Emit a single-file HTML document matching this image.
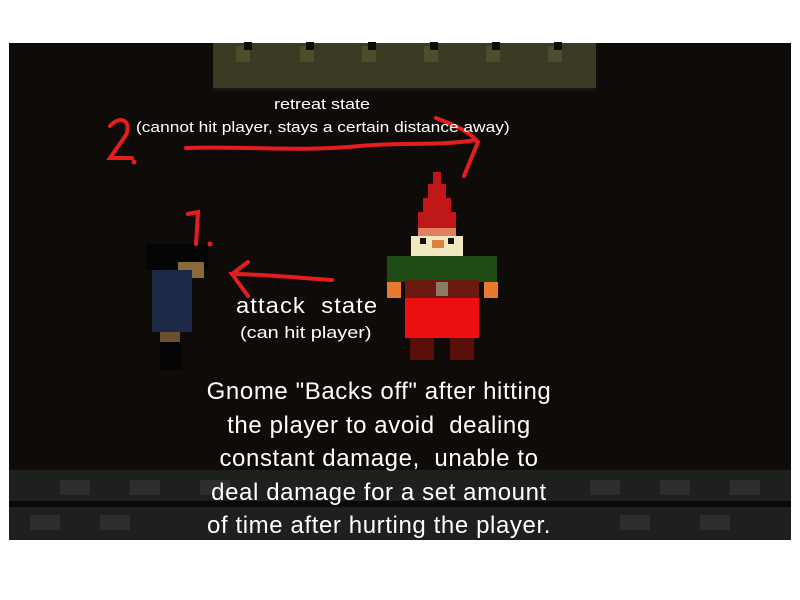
<!DOCTYPE html>
<html><head><style>
body{margin:0;width:800px;height:600px;background:#fff;position:relative;overflow:hidden;font-family:"Liberation Sans",sans-serif}
#p{position:absolute;left:9px;top:43px;width:782px;height:497px;background:#0e0b08;overflow:hidden}
.a{position:absolute}
.t{position:absolute;color:#fff;white-space:nowrap;transform-origin:0 0}
</style></head><body>
<div id="p">
<div class="a" style="left:204px;top:0;width:383px;height:45px;background:#3a3b22"></div>
<div class="a" style="left:204px;top:45px;width:383px;height:3px;background:#161510"></div>
<div class="a" style="left:0;top:427px;width:782px;height:70px;background:#1d201c"></div>
<div class="a" style="left:0;top:458px;width:782px;height:6px;background:#0a0a0a"></div>
</div>
<svg class="a" style="left:0;top:0" width="800" height="600">
<g fill="#4c4e2c">
<rect x="236" y="46" width="14" height="16"/><rect x="300" y="46" width="14" height="16"/><rect x="362" y="46" width="14" height="16"/><rect x="424" y="46" width="14" height="16"/><rect x="486" y="46" width="14" height="16"/><rect x="548" y="46" width="14" height="16"/>
</g>
<g fill="#0e0b08"><rect x="244" y="42" width="8" height="8"/><rect x="306" y="42" width="8" height="8"/><rect x="368" y="42" width="8" height="8"/><rect x="430" y="42" width="8" height="8"/><rect x="492" y="42" width="8" height="8"/><rect x="554" y="42" width="8" height="8"/></g>
<g fill="#2b2e2a">
<rect x="60" y="480" width="30" height="15"/><rect x="130" y="480" width="30" height="15"/><rect x="200" y="480" width="30" height="15"/><rect x="590" y="480" width="30" height="15"/><rect x="660" y="480" width="30" height="15"/><rect x="730" y="480" width="30" height="15"/>
<rect x="30" y="515" width="30" height="15"/><rect x="100" y="515" width="30" height="15"/><rect x="620" y="515" width="30" height="15"/><rect x="700" y="515" width="30" height="15"/>
</g>
<g>
<rect x="433" y="172" width="8" height="12" fill="#c01818"/>
<rect x="428" y="184" width="18" height="14" fill="#c01818"/>
<rect x="423" y="198" width="28" height="14" fill="#c01818"/>
<rect x="418" y="212" width="38" height="16" fill="#c01818"/>
<rect x="418" y="228" width="38" height="8" fill="#e08060"/>
<rect x="411" y="236" width="52" height="20" fill="#f2e8c0"/>
<rect x="420" y="238" width="6" height="6" fill="#111"/><rect x="448" y="238" width="6" height="6" fill="#111"/>
<rect x="432" y="240" width="12" height="8" fill="#e08040"/>
<rect x="387" y="256" width="110" height="26" fill="#1e4a14"/>
<rect x="387" y="282" width="14" height="16" fill="#e87a30"/><rect x="484" y="282" width="14" height="16" fill="#e87a30"/>
<rect x="405" y="280" width="74" height="18" fill="#6a1a0e"/>
<rect x="436" y="282" width="12" height="14" fill="#8a7a66"/>
<rect x="405" y="298" width="74" height="40" fill="#ee1010"/>
<rect x="410" y="338" width="24" height="22" fill="#5a1008"/><rect x="450" y="338" width="24" height="22" fill="#5a1008"/>
</g>
<g>
<rect x="146" y="244" width="62" height="26" fill="#050505"/>
<rect x="178" y="262" width="26" height="16" fill="#8a6a38"/>
<rect x="152" y="270" width="40" height="62" fill="#1c2a48"/>
<rect x="160" y="332" width="20" height="10" fill="#6a4e30"/>
<rect x="160" y="342" width="22" height="28" fill="#050505"/>
</g>
<g fill="none" stroke="#e41e1e" stroke-width="4" stroke-linecap="round">
<path d="M110 126 C120 115 132 120 126 135 L110 158 L132 158"/>
<path d="M186 148 C240 146 300 152 360 146 C400 142 440 146 476 140"/>
<path d="M436 118 C455 125 470 132 478 142 L464 176"/>
<path d="M332 280 C300 278 260 274 232 274 L248 296"/>
<path d="M232 274 L248 262"/>
<path d="M188 214 L198 212 L196 244"/>
</g>
<circle cx="134" cy="162" r="2.5" fill="#e41e1e"/><circle cx="210" cy="244" r="2.5" fill="#e41e1e"/>
</svg>
<div class="t" style="left:274px;top:96px;font-size:15px;transform:scaleX(1.2)">retreat state</div>
<div class="t" style="left:136px;top:119px;font-size:15px;transform:scaleX(1.155)">(cannot hit player, stays a certain distance away)</div>
<div class="t" style="left:236px;top:293px;font-size:22px;letter-spacing:1px;transform:scaleX(1.08)">attack&nbsp; state</div>
<div class="t" style="left:240px;top:323px;font-size:17px;transform:scaleX(1.17)">(can hit player)</div>
<div class="t" style="left:0;width:758px;top:375px;font-size:24px;letter-spacing:0.6px;line-height:33.5px;text-align:center;white-space:normal">Gnome "Backs off" after hitting<br>the player to avoid&nbsp; dealing<br>constant damage,&nbsp; unable to<br>deal damage for a set amount<br>of time after hurting the player.</div>
</body></html>
